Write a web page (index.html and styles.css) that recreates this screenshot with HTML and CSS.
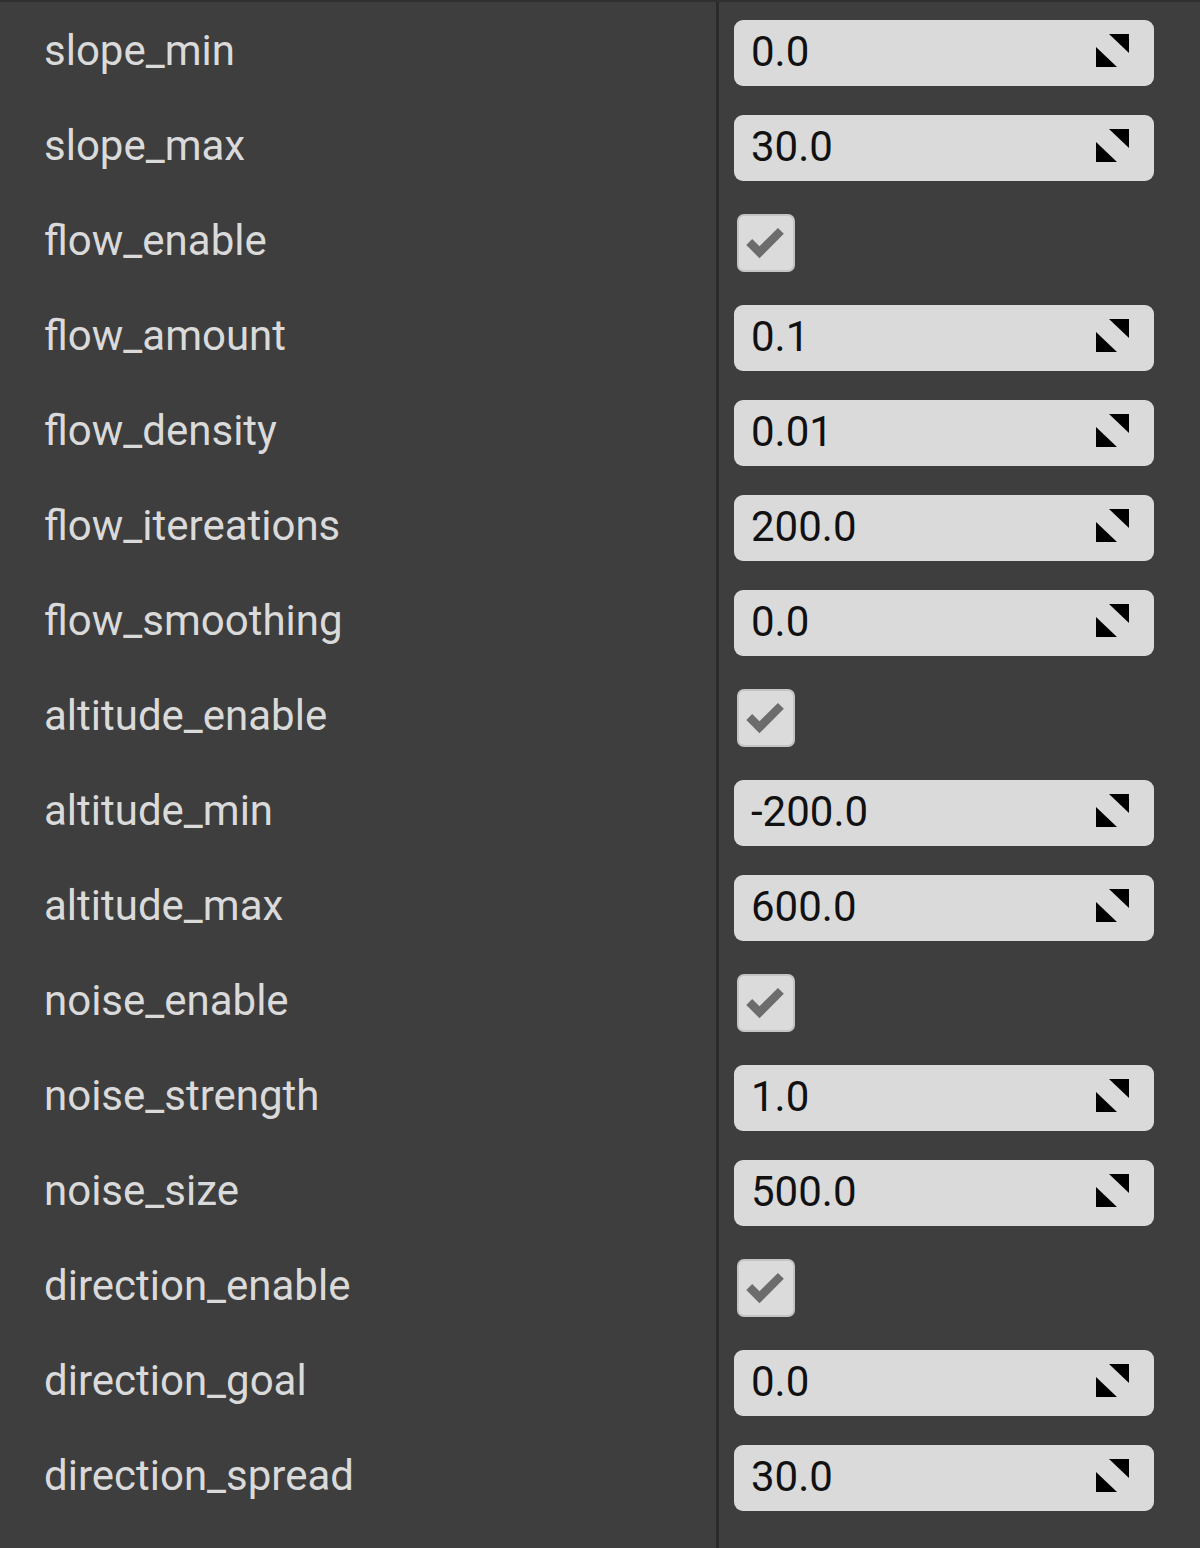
FILE: index.html
```html
<!DOCTYPE html>
<html>
<head>
<meta charset="utf-8">
<link rel="stylesheet" href="styles.css">
</head>
<body>
<div class="panel">
  <div class="row"><div class="label">slope_min</div><div class="value"><div class="num"><span>0.0</span><svg class="spin" viewBox="0 0 34 34"><polygon points="13,0 33,0 33,19"/><polygon points="0,13 0,33 21,33"/></svg></div></div></div>
  <div class="row"><div class="label">slope_max</div><div class="value"><div class="num"><span>30.0</span><svg class="spin" viewBox="0 0 34 34"><polygon points="13,0 33,0 33,19"/><polygon points="0,13 0,33 21,33"/></svg></div></div></div>
  <div class="row"><div class="label">flow_enable</div><div class="value"><div class="check"><svg viewBox="0 0 58 58"><polyline points="11,28 22,39 45,16"/></svg></div></div></div>
  <div class="row"><div class="label">flow_amount</div><div class="value"><div class="num"><span>0.1</span><svg class="spin" viewBox="0 0 34 34"><polygon points="13,0 33,0 33,19"/><polygon points="0,13 0,33 21,33"/></svg></div></div></div>
  <div class="row"><div class="label">flow_density</div><div class="value"><div class="num"><span>0.01</span><svg class="spin" viewBox="0 0 34 34"><polygon points="13,0 33,0 33,19"/><polygon points="0,13 0,33 21,33"/></svg></div></div></div>
  <div class="row"><div class="label">flow_itereations</div><div class="value"><div class="num"><span>200.0</span><svg class="spin" viewBox="0 0 34 34"><polygon points="13,0 33,0 33,19"/><polygon points="0,13 0,33 21,33"/></svg></div></div></div>
  <div class="row"><div class="label">flow_smoothing</div><div class="value"><div class="num"><span>0.0</span><svg class="spin" viewBox="0 0 34 34"><polygon points="13,0 33,0 33,19"/><polygon points="0,13 0,33 21,33"/></svg></div></div></div>
  <div class="row"><div class="label">altitude_enable</div><div class="value"><div class="check"><svg viewBox="0 0 58 58"><polyline points="11,28 22,39 45,16"/></svg></div></div></div>
  <div class="row"><div class="label">altitude_min</div><div class="value"><div class="num"><span>-200.0</span><svg class="spin" viewBox="0 0 34 34"><polygon points="13,0 33,0 33,19"/><polygon points="0,13 0,33 21,33"/></svg></div></div></div>
  <div class="row"><div class="label">altitude_max</div><div class="value"><div class="num"><span>600.0</span><svg class="spin" viewBox="0 0 34 34"><polygon points="13,0 33,0 33,19"/><polygon points="0,13 0,33 21,33"/></svg></div></div></div>
  <div class="row"><div class="label">noise_enable</div><div class="value"><div class="check"><svg viewBox="0 0 58 58"><polyline points="11,28 22,39 45,16"/></svg></div></div></div>
  <div class="row"><div class="label">noise_strength</div><div class="value"><div class="num"><span>1.0</span><svg class="spin" viewBox="0 0 34 34"><polygon points="13,0 33,0 33,19"/><polygon points="0,13 0,33 21,33"/></svg></div></div></div>
  <div class="row"><div class="label">noise_size</div><div class="value"><div class="num"><span>500.0</span><svg class="spin" viewBox="0 0 34 34"><polygon points="13,0 33,0 33,19"/><polygon points="0,13 0,33 21,33"/></svg></div></div></div>
  <div class="row"><div class="label">direction_enable</div><div class="value"><div class="check"><svg viewBox="0 0 58 58"><polyline points="11,28 22,39 45,16"/></svg></div></div></div>
  <div class="row"><div class="label">direction_goal</div><div class="value"><div class="num"><span>0.0</span><svg class="spin" viewBox="0 0 34 34"><polygon points="13,0 33,0 33,19"/><polygon points="0,13 0,33 21,33"/></svg></div></div></div>
  <div class="row"><div class="label">direction_spread</div><div class="value"><div class="num"><span>30.0</span><svg class="spin" viewBox="0 0 34 34"><polygon points="13,0 33,0 33,19"/><polygon points="0,13 0,33 21,33"/></svg></div></div></div>
</div>
</body>
</html>
```
FILE: styles.css
```css
html, body {
  margin: 0;
  padding: 0;
  background: #3e3e3e;
}
.panel {
  width: 1200px;
  height: 1548px;
  box-sizing: border-box;
  border-top: 2px solid #303030;
  padding-top: 3px;
  background: linear-gradient(to right, transparent 716px, #2b2b2b 716px, #2b2b2b 719px, transparent 719px);
  font-family: Roboto, "Liberation Sans", sans-serif;
}
.row {
  display: flex;
  height: 95px;
  align-items: center;
}
.label {
  width: 719px;
  box-sizing: border-box;
  padding-left: 44px;
  color: #dadada;
  font-size: 42px;
  line-height: 1;
  padding-bottom: 4px;
}
.value {
  flex: 1;
  padding-left: 15px;
  display: flex;
  align-items: center;
}
.num {
  width: 420px;
  height: 66px;
  box-sizing: border-box;
  background: #dadada;
  border-radius: 9px;
  display: flex;
  align-items: center;
  justify-content: space-between;
  padding-left: 17px;
  padding-right: 24px;
  color: #111;
  font-size: 42px;
}
.num span {
  padding-bottom: 2px;
}
.spin {
  width: 34px;
  height: 34px;
  fill: #000;
  margin-top: -3px;
}
.check {
  width: 58px;
  height: 58px;
  margin-left: 3px;
  box-sizing: border-box;
  background: #dbdbdb;
  border: 2px solid #c4c4c4;
  border-radius: 7px;
}
.check svg {
  display: block;
  width: 54px;
  height: 54px;
  fill: none;
  stroke: #6c6c6c;
  stroke-width: 9;
  stroke-linejoin: miter;
}
```
